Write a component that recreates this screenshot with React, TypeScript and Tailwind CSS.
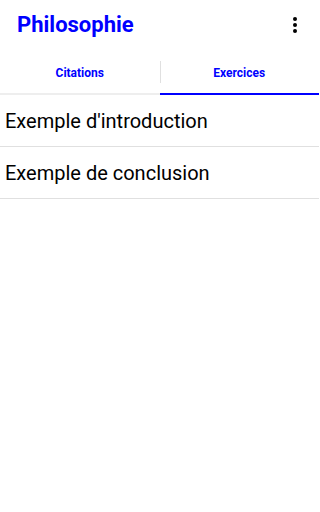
export default function App() {
  const tabs = [
    { name: 'Citations', active: false },
    { name: 'Exercices', active: true },
  ];

  const items = ["Exemple d'introduction", 'Exemple de conclusion'];

  return (
    <div className="w-[319px] h-[512px] bg-white font-['Roboto',sans-serif]">
      {/* Header */}
      <div className="h-[50px] flex items-center justify-between pl-[17px] pr-[22px]">
        <h1 className="text-[22px] font-bold text-[#0000ff] leading-none">Philosophie</h1>
        <div className="flex flex-col items-center gap-[2px]">
          <span className="w-1 h-1 rounded-full bg-black"></span>
          <span className="w-1 h-1 rounded-full bg-black"></span>
          <span className="w-1 h-1 rounded-full bg-black"></span>
        </div>
      </div>

      {/* Tabs */}
      <div className="flex h-[45px]">
        {tabs.map((tab, index) => (
          <div
            key={index}
            className={`flex-1 relative flex items-center justify-center pt-[2px] border-b-2 ${
              tab.active ? 'border-[#0000ff]' : 'border-[#eeeeee]'
            }`}
          >
            {index > 0 && (
              <span className="absolute left-0 top-[11px] h-[22px] w-px bg-[#e0e0e0]"></span>
            )}
            <span className="text-[12px] font-bold text-[#0000ff]">{tab.name}</span>
          </div>
        ))}
      </div>

      {/* List */}
      <ul>
        {items.map((item, index) => (
          <li
            key={index}
            className="h-[52px] flex items-center px-[5px] border-b border-[#e0e0e0] text-[20px] text-black"
          >
            {item}
          </li>
        ))}
      </ul>
    </div>
  );
}
